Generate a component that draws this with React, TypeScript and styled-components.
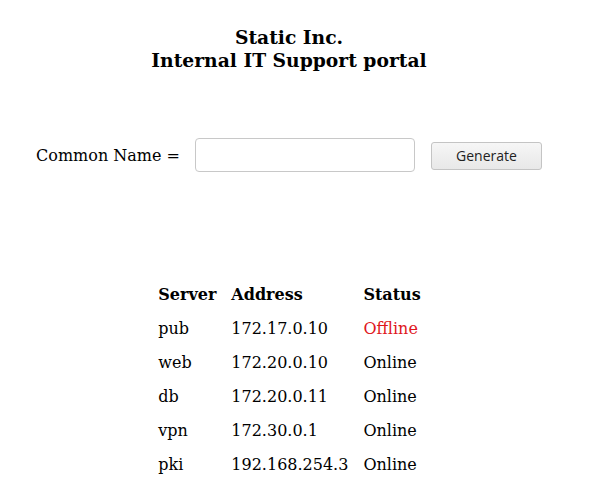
import React from 'react';
import styled, { createGlobalStyle } from 'styled-components';

interface Server {
	name: string;
	address: string;
	online: boolean;
}

const servers: Server[] = [
	{ name: 'pub', address: '172.17.0.10', online: false },
	{ name: 'web', address: '172.20.0.10', online: true },
	{ name: 'db', address: '172.20.0.11', online: true },
	{ name: 'vpn', address: '172.30.0.1', online: true },
	{ name: 'pki', address: '192.168.254.3', online: true },
];

const GlobalStyle = createGlobalStyle`
	body {
		margin: 8px;
		background: #fff;
		color: #000;
		font-family: "DejaVu Serif", serif;
		font-size: 16px;
	}
`;

export default function App() {
	return (
		<>
			<GlobalStyle />
			<Page>
				<Title>
					Static Inc.
					<br />
					Internal IT Support portal
				</Title>

				<Form onSubmit={e => e.preventDefault()}>
					<Label htmlFor="cn">Common Name =</Label>
					<NameInput id="cn" type="text" />
					<GenerateButton type="submit">Generate</GenerateButton>
				</Form>

				<Table>
					<thead>
						<tr>
							<HeadCell>Server</HeadCell>
							<HeadCell>Address</HeadCell>
							<HeadCell>Status</HeadCell>
						</tr>
					</thead>
					<tbody>
						{servers.map(s => (
							<tr key={s.name}>
								<Cell>{s.name}</Cell>
								<Cell>{s.address}</Cell>
								<StatusCell $online={s.online}>{s.online ? 'Online' : 'Offline'}</StatusCell>
							</tr>
						))}
					</tbody>
				</Table>
			</Page>
		</>
	);
}

const Page = styled.div`
	width: 562px;
	display: flex;
	flex-direction: column;
	align-items: center;
`;

const Title = styled.h3`
	margin: 18px 0 0;
	font-size: 18.72px;
	font-weight: bold;
	text-align: center;
	line-height: 23px;
`;

const Form = styled.form`
	margin-top: 66px;
	display: flex;
	align-items: center;
`;

const Label = styled.label`
	font-size: 16px;
	margin-right: 15px;
`;

const NameInput = styled.input`
	box-sizing: border-box;
	width: 220px;
	height: 34px;
	margin: 0 16px 0 0;
	border: 1px solid #c8c8c8;
	border-radius: 4px;
	background: #fff;
	padding: 0 8px;
	font-size: 14px;
	outline: none;
`;

const GenerateButton = styled.button`
	box-sizing: border-box;
	width: 111px;
	height: 28px;
	margin-top: 1px;
	border: 1px solid #c4c4c4;
	border-radius: 3px;
	background: linear-gradient(#f6f6f6, #e8e8e8);
	color: #222;
	font-family: "Open Sans", sans-serif;
	font-size: 14px;
	padding: 0;
`;

const Table = styled.table`
	margin-top: 106px;
	border-collapse: separate;
	border-spacing: 0;
`;

const HeadCell = styled.th`
	text-align: left;
	font-weight: bold;
	padding: 7px 7px 7px 8px;
	line-height: 20px;
`;

const Cell = styled.td`
	padding: 7px 7px 7px 8px;
	line-height: 20px;
`;

const StatusCell = styled(Cell)<{ $online: boolean }>`
	color: ${p => p.$online ? '#000' : '#e0161c'};
`;
